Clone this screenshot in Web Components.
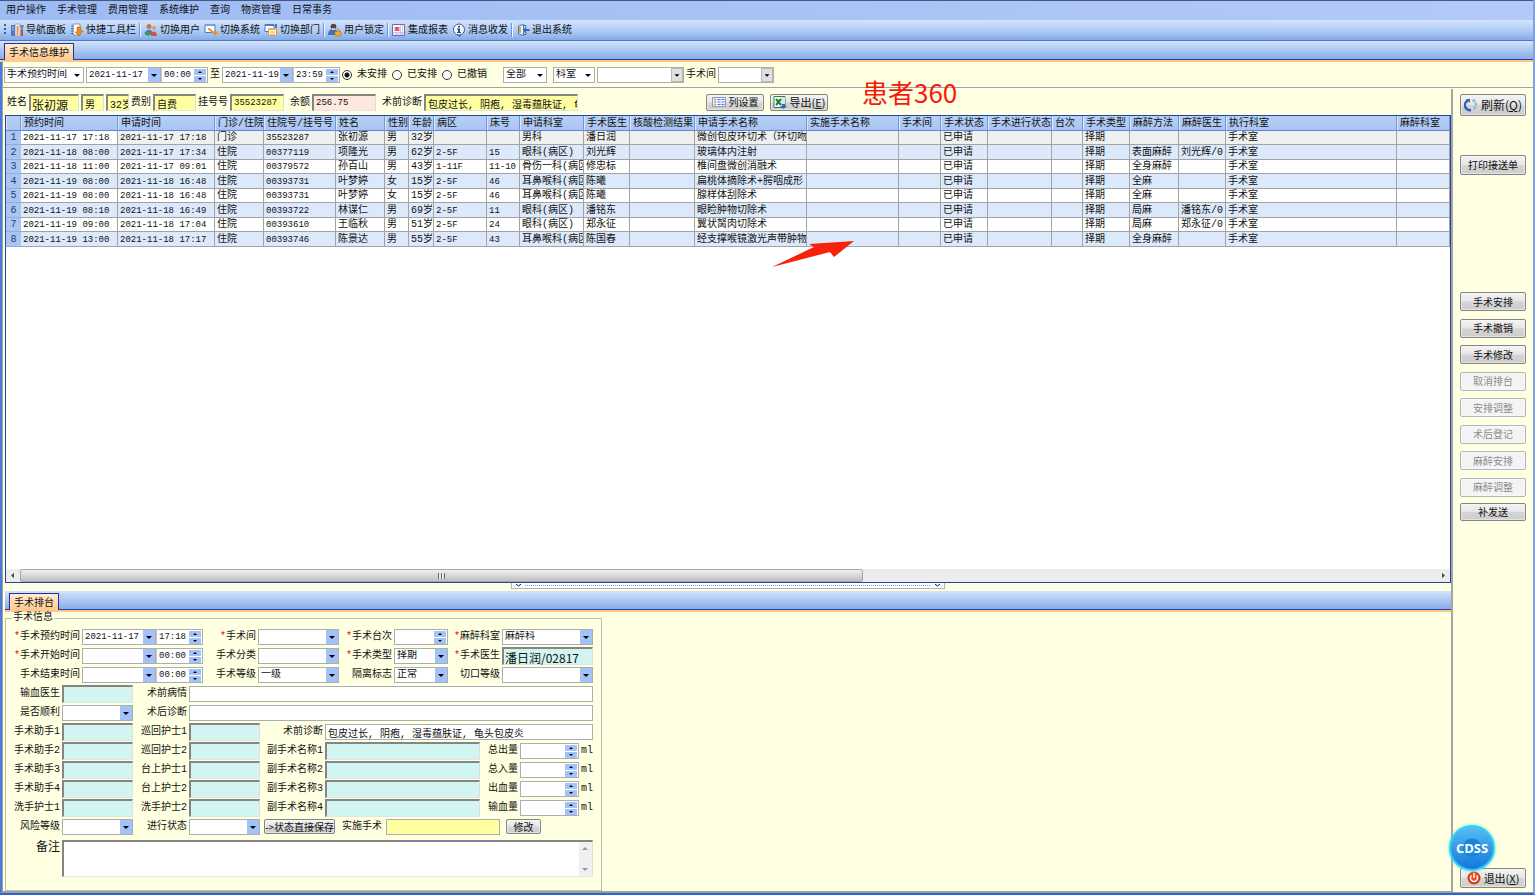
<!DOCTYPE html>
<html lang="zh-CN">
<head>
<meta charset="utf-8">
<title>手术信息维护</title>
<style>
    html, body {
        margin: 0;
        height: 100%;
    }

    body {
        font: 10px/12px "Liberation Mono", "Noto Sans CJK SC", monospace;
        color: #111;
        overflow: hidden;
    }
</style>
</head>
<body>
<surgery-app></surgery-app>

<script>
const down = '<svg class="arrow" viewBox="0 0 12 14" aria-hidden="true"><path d="M3 6h6L6 9z"/></svg>';

const controlStyles = `
    * { box-sizing: border-box; }
    button, input, select, textarea {
        font: inherit;
        color: inherit;
        margin: 0;
        padding: 0;
        border: 0;
        border-radius: 0;
        background: none;
        min-width: 0;
        outline: 0;
    }
    select { appearance: none; }
`;

const icons = {
    nav: '<path fill="#4a7cc8" d="M1 2h4v11H1z"/><path fill="#9cc2ee" d="M2 4h2v1H2zM2 6h2v1H2z"/><path fill="#e8edf5" stroke="#7587a8" stroke-width=".6" d="M5 1h5v12H5z"/><path stroke="#d8482c" stroke-width="2" d="M12 7v6"/><path stroke="#6b7f9c" stroke-width="1.6" fill="none" d="M11 2c0 3 2 3 2 0M12 4v3"/><path stroke="#e89030" stroke-width="1.6" d="M7.500 3v9"/>',
    quick: '<path fill="#fff" stroke="#6d87ad" stroke-width=".8" d="M3 1h7v11H3z"/><path stroke="#506e9e" d="M1 3h3M1 5.500h3M1 8h3M1 10.500h3"/><path fill="#f08a20" stroke="#b85a10" stroke-width=".5" d="M7 4h4v4h2l-4 5-4-4h2z"/>',
    users: '<circle cx="5" cy="3.500" r="2.500" fill="#c87848"/><path fill="#4878c0" d="M1 12c0-7 8-7 8 0z"/><circle cx="10" cy="5" r="2" fill="#e0a070"/><path fill="#d85038" d="M7 13c0-6 6-6 6 0z"/><path stroke="#3aa040" stroke-width="1.800" fill="none" d="M1 9l3 3 3-3"/>',
    system: '<path fill="#fff" stroke="#3f7fd0" d="M1 1.500h10v8H1z"/><path fill="#6ba2e8" d="M1 1h10v2H1z"/><path fill="none" stroke="#f08c1c" stroke-width="2" d="M4 6c3-1 3 4 7 4"/><path fill="#f08c1c" d="M10 7l4 3-4 3z"/>',
    dept: '<path fill="#fff" stroke="#3f7fd0" d="M1 1.500h9v7H1z"/><path fill="#3f7fd0" d="M1 1h9v2H1zM11 1h2v4h-2z"/><path fill="#fff8e0" stroke="#d8962c" d="M4.500 5.500h8v7h-8z"/><path fill="#f0b048" d="M4 5h9v2H4z"/><path stroke="#d8b878" d="M6 9h5M6 11h5"/>',
    lock: '<circle cx="5.500" cy="3.500" r="2.800" fill="#54404a"/><path fill="#3f70bd" d="M0 12c0-8 10-8 10 0z"/><path fill="#e8c0a0" d="M4 5h3v2H4z"/><path fill="none" stroke="#b08030" d="M8.500 9V7.500c0-2 3-2 3 0V9"/><path fill="#f4a82c" stroke="#a86a10" stroke-width=".5" d="M7 8.500h6v4.500H7z"/>',
    report: '<path fill="#fff" stroke="#7468b8" d="M.5 1.500h12v11H.5z"/><path stroke="#b9b2de" stroke-width=".7" d="M1 9.500h11M8.500 2v10M10.500 2v10M1 11h11M5 9v3"/><path fill="none" stroke="#d84860" d="M3 4.500h4v3H3z"/><path fill="#d84860" d="M4 5h2v2H4z"/>',
    info: '<circle cx="7" cy="6.500" r="5.500" fill="#f4f8ff" stroke="#41597e"/><path fill="#184fa8" d="M6 3h2v1.500H6zM5 5.500h3V9h1v1H5V9h1V6.500H5z"/><path fill="#41597e" d="M5 12h4l-1 2z"/>',
    exit: '<path fill="#e8f2ff" stroke="#3b76c0" d="M2.500 3l5-1.500v11l-5-1.500z"/><path fill="none" stroke="#3b76c0" d="M7.500 2.500h2.500v2M10 9v2.500H7.500"/><path fill="#f0a030" d="M3 4h2v6H3z"/><path fill="#2868c0" d="M13.500 6H10V4L7 7l3 3V8h3.500z"/>',
    columns: '<path fill="#eef4ff" stroke="#7f9bd0" d="M.5 2.500h13v9H.5z"/><path stroke="#f08a38" stroke-width="1.500" d="M2 4.500h2M2 7h2M2 9.500h2"/><path stroke="#4f7fd8" d="M5.500 4.500h3M9.500 4.500h3M5.500 7h3M9.500 7h3M5.500 9.500h3M9.500 9.500h3"/>',
    excel: '<path fill="#fff" stroke="#2f7d46" d="M1 1.500h11v11H1z"/><path fill="#d6ecd9" d="M8 2h4v10H8z"/><path stroke="#1f7a38" stroke-width="2" d="M3 4l5 6M8 4l-5 6"/><path fill="#2c70c8" d="M9 9h3v2h2l-3.500 3L7 11h2z"/>',
    refresh: '<path fill="none" stroke="#2f64b0" stroke-width="2.500" d="M4 2.500a5 5 0 0 0 3 9.500"/><path fill="none" stroke="#8db8e8" stroke-width="2.500" stroke-dasharray="3 1" d="M8.500 2a5 5 0 0 1 1 9"/><path fill="#2f64b0" d="M2 1h4v4z"/>',
    power: '<circle cx="7" cy="7" r="6.500" fill="#dc3414"/><circle cx="7" cy="6" r="5" fill="#f06028" opacity=".6"/><path fill="none" stroke="#fff" stroke-width="1.500" d="M4.500 4.500a3.500 3.500 0 1 0 5 0M7 2v5"/>'
};

const icon = (name) => `<svg class="icon" viewBox="0 0 14 14" aria-hidden="true">${icons[name]}</svg>`;

class MenuBar extends HTMLElement {
    constructor() {
        super();
        this.attachShadow({ mode: 'open' });
        this.shadowRoot.innerHTML = `
            <style>
                :host {
                    display: flex;
                    align-items: center;
                    gap: 11px;
                    height: 20px;
                    padding: 1px 0 0 6px;
                    box-sizing: border-box;
                    border-top: 1px solid #46597c;
                    background: linear-gradient(90deg, #9dbbf4, #b3caf8);
                }
                ::slotted(button) {
                    font: inherit;
                    color: inherit;
                    border: 0;
                    padding: 0;
                    background: none;
                }
            </style>
            <slot></slot>
        `;
    }
}

class ToolBar extends HTMLElement {
    constructor() {
        super();
        this.attachShadow({ mode: 'open' });
        this.shadowRoot.innerHTML = `
            <style>
                :host {
                    display: flex;
                    align-items: center;
                    gap: 4px;
                    height: 21px;
                    padding-left: 4px;
                    box-sizing: border-box;
                    border-bottom: 1px solid #4d76c0;
                    background: linear-gradient(#d3e3fc, #aecbf6 55%, #85abe6);
                }
                .grip {
                    width: 2px;
                    height: 12px;
                    background: repeating-linear-gradient(#3d5f9c 0 2px, transparent 2px 4px);
                }
                ::slotted(hr) {
                    width: 2px;
                    height: 14px;
                    margin: 0 -1px;
                    border: 0;
                    background: linear-gradient(90deg, #6f93ce 50%, #f0f6ff 50%);
                }
            </style>
            <span class="grip"></span><slot></slot>
        `;
    }
}

class ToolButton extends HTMLElement {
    connectedCallback() {
        this.attachShadow({ mode: 'open' });
        this.shadowRoot.innerHTML = `
            <style>
                ${controlStyles}
                :host { display: block; }
                button { display: flex; align-items: center; gap: 2px; white-space: nowrap; }
                span { padding-top: 2px; }
                .icon { width: 14px; height: 14px; }
            </style>
            <button type="button">${icon(this.getAttribute('icon'))}<span><slot></slot></span></button>
        `;
    }
}

class TabStrip extends HTMLElement {
    constructor() {
        super();
        this.attachShadow({ mode: 'open' });
        this.shadowRoot.innerHTML = `
            <style>
                ${controlStyles}
                :host {
                    display: flex;
                    align-items: flex-end;
                    height: 21px;
                    padding: 0 4px;
                    box-sizing: border-box;
                    border-bottom: 2px solid #fdc88c;
                    background: linear-gradient(#d2e3fc, #84aae6);
                    box-shadow: inset 0 -1px #2a3c9e;
                }
                button {
                    height: 17px;
                    padding: 3px 4px 0;
                    border: 1px solid #25309a;
                    border-bottom: 0;
                    background: linear-gradient(#ffecd2, #ffc98c);
                }
            </style>
            <button type="button" role="tab" aria-selected="true"><slot></slot></button>
        `;
    }
}

class CmdButton extends HTMLElement {
    connectedCallback() {
        const name = this.getAttribute('icon');
        this.attachShadow({ mode: 'open' });
        this.shadowRoot.innerHTML = `
            <style>
                ${controlStyles}
                :host { display: block; flex: none; font-family: "Noto Sans CJK SC", sans-serif; }
                button {
                    display: flex;
                    align-items: center;
                    justify-content: center;
                    gap: 3px;
                    width: 100%;
                    height: var(--h, 18px);
                    border: 1px solid #858585;
                    border-radius: 2px;
                    background: linear-gradient(#f4f4f4, #e6e6e6 48%, #d4d4d4 52%, #cecece);
                    box-shadow: inset 0 0 0 1px #fafafa80;
                    white-space: nowrap;
                }
                button:disabled { border-color: #b4b8bc; background: #f4f4f4; color: #8c8c8c; }
                .icon { width: 14px; height: 14px; }
            </style>
            <button type="button" ${this.hasAttribute('disabled') ? 'disabled' : ''}>
                ${name ? icon(name) : ''}<span><slot></slot></span>
            </button>
        `;
    }
}

class RadioGroup extends HTMLElement {
    connectedCallback() {
        const options = this.getAttribute('options').split(',');
        this.attachShadow({ mode: 'open' });
        this.shadowRoot.innerHTML = `
            <style>
                :host { display: flex; gap: 5px; }
                label { display: flex; align-items: center; gap: 5px; white-space: nowrap; }
                input {
                    appearance: none;
                    width: 10px;
                    height: 10px;
                    margin: 0;
                    border: 1px solid #333;
                    border-radius: 50%;
                    background: #fff;
                }
                input:checked { background: radial-gradient(#111 2px, #fff 3px); }
            </style>
            ${options.map((text, i) => `<label><input type="radio" name="state" ${i === 0 ? 'checked' : ''}>${text}</label>`).join('')}
        `;
    }
}

// Label and control are laid out directly by the parent's grid or flex box.
class FormField extends HTMLElement {
    connectedCallback() {
        this.attachShadow({ mode: 'open' });
        const label = this.getAttribute('label');
        const type = this.getAttribute('type') || 'text';
        const width = this.getAttribute('width');
        const span = this.getAttribute('span');
        const style = (width ? `width:${width}px;` : '') + (span ? `grid-column:span ${span};` : '');
        this.shadowRoot.innerHTML = `
            <style>
                ${controlStyles}
                :host { display: contents; }
                label { padding-top: 1px; white-space: nowrap; text-align: right; }
                label.big { font-size: 12px; line-height: 14px; align-self: start; }
                i { color: #f00; font-style: normal; }
                .control { display: flex; flex: none; min-width: 0; }
                .box {
                    display: grid;
                    grid-template-columns: minmax(0, 1fr) auto;
                    flex: 1;
                    min-width: 0;
                    height: 16px;
                    border: 1px solid #a9adb4;
                    background: #fff;
                }
                .box > input, .box > select, .box > textarea { width: 100%; height: 100%; padding: 1px 0 0 2px; }
                .box.clock { flex: 0 0 auto; width: 47px; border-left-color: #c8c8c8; }
                .date, .clock, .num { font-size: 9px; }
                .box > select { grid-area: 1 / 1 / 2 / 3; }
                .box > .arrow { grid-area: 1 / 2; pointer-events: none; }
                .arrow { display: block; width: 12px; height: 14px; background: #a3c2f8; }
                .flat .arrow { background: none; }
                .grey .arrow { background: #e0e0e0; border: 1px solid #b8b8b8; }
                .lookup, .yellow, .pink {
                    height: 18px;
                    border-color: #858585 #dedede #e4e4e4 #858585;
                    border-width: 2px 1px 1px 2px;
                    background: #d3f5f2;
                }
                .yellow { height: 17px; background: #ffffa0; }
                .pink { height: 17px; background: #ffe9df; }
                .plain { height: 16px; border: 1px solid #a9adb4; background: #ffffa0; }
                .large { font: 12px/14px "Noto Sans CJK SC", sans-serif; }
                .large > input { padding: 0 0 0 1px; }
                .spin { display: grid; grid-template-rows: 1fr 1fr; gap: 1px; width: 13px; padding: 1px 1px 0 0; }
                .spin button { display: block; background: #a3c2f8; }
                .spin svg { display: block; width: 100%; height: 100%; }
                .memo {
                    height: 37px;
                    border-color: #858585 #dedede #e4e4e4 #858585;
                    border-width: 2px 1px 1px 2px;
                }
                textarea { resize: none; overflow: hidden; }
                .rail { display: grid; align-content: space-between; width: 13px; background: #f0f0f0; fill: #999; }
                .rail .arrow { background: none; }
                .rail .arrow:first-child { transform: rotate(180deg); }
            </style>
            ${label ? `<label for="field" class="${this.hasAttribute('big') ? 'big' : ''}">${this.hasAttribute('required') ? '<i>*</i>' : ''}${label}</label>` : ''}
            <span class="control" style="${style}">${this.renderControl(type)}</span>
        `;
    }

    renderControl(type) {
        const value = this.getAttribute('value') || '';
        const look = this.getAttribute('look') || '';
        const name = this.hasAttribute('label') ? '' : `aria-label="${this.getAttribute('name')}"`;
        const spin = `
            <span class="spin">
                <button type="button" aria-label="增加"><svg viewBox="0 0 12 6"><path d="M4 4h4L6 2z"/></svg></button>
                <button type="button" aria-label="减少"><svg viewBox="0 0 12 6"><path d="M4 2h4L6 4z"/></svg></button>
            </span>`;

        if (type === 'select') {
            return `<span class="box ${look}"><select id="field" ${name}><option>${value}</option></select>${down}</span>`;
        }
        if (type === 'date') {
            return `
                <span class="box date"><input id="field" ${name} value="${value}"><button type="button" aria-label="选择日期">${down}</button></span>
                <span class="box clock"><input aria-label="时间" value="${this.getAttribute('time')}">${spin}</span>`;
        }
        if (type === 'spin') {
            return `<span class="box"><input id="field" ${name} value="${value}">${spin}</span>`;
        }
        if (type === 'memo') {
            return `<span class="box memo"><textarea id="field"></textarea><span class="rail">${down}${down}</span></span>`;
        }
        return `<span class="box ${look}"><input id="field" ${name} value="${value}"></span>`;
    }
}

const columns = [
    ['预约时间', 97], ['申请时间', 97], ['门诊/住院', 49], ['住院号/挂号号', 72], ['姓名', 49], ['性别', 24],
    ['年龄', 25], ['病区', 53], ['床号', 33], ['申请科室', 64], ['手术医生', 46], ['核酸检测结果', 65],
    ['申请手术名称', 112], ['实施手术名称', 92], ['手术间', 42], ['手术状态', 47], ['手术进行状态', 64],
    ['台次', 31], ['手术类型', 47], ['麻醉方法', 49], ['麻醉医生', 47], ['执行科室', 0], ['麻醉科室', 53]
];

// Columns holding digits only
const numeric = [0, 1, 3, 7, 8];

const surgeries = [
    ['2021-11-17 17:18', '2021-11-17 17:18', '门诊', '35523287', '张初源', '男', '32岁', '', '', '男科', '潘日润', '微创包皮环切术（环切吻', '', ''],
    ['2021-11-18 08:00', '2021-11-17 17:34', '住院', '00377119', '项隆光', '男', '62岁', '2-5F', '15', '眼科(病区)', '刘光辉', '玻璃体内注射', '表面麻醉', '刘光辉/0'],
    ['2021-11-18 11:00', '2021-11-17 09:01', '住院', '00379572', '孙百山', '男', '43岁', '1-11F', '11-10', '骨伤一科(病区', '修忠标', '椎间盘微创消融术', '全身麻醉', ''],
    ['2021-11-19 08:00', '2021-11-18 16:48', '住院', '00393731', '叶梦婷', '女', '15岁', '2-5F', '46', '耳鼻喉科(病区', '陈曦', '扁桃体摘除术+腭咽成形', '全麻', ''],
    ['2021-11-19 08:00', '2021-11-18 16:48', '住院', '00393731', '叶梦婷', '女', '15岁', '2-5F', '46', '耳鼻喉科(病区', '陈曦', '腺样体刮除术', '全麻', ''],
    ['2021-11-19 08:10', '2021-11-18 16:49', '住院', '00393722', '林谋仁', '男', '69岁', '2-5F', '11', '眼科(病区)', '潘铭东', '眼睑肿物切除术', '局麻', '潘铭东/0'],
    ['2021-11-19 09:00', '2021-11-18 17:04', '住院', '00393610', '王临秋', '男', '51岁', '2-5F', '24', '眼科(病区)', '郑永征', '翼状胬肉切除术', '局麻', '郑永征/0'],
    ['2021-11-19 13:00', '2021-11-18 17:17', '住院', '00393746', '陈景达', '男', '55岁', '2-5F', '43', '耳鼻喉科(病区', '陈国春', '经支撑喉镜激光声带肿物', '全身麻醉', '']
];

class SurgeryGrid extends HTMLElement {
    constructor() {
        super();
        this.attachShadow({ mode: 'open' });
    }

    connectedCallback() {
        const rows = surgeries.map((row, i) => {
            const cells = [...row.slice(0, 11), '', row[11], '', '', '已申请', '', '', '择期', row[12], row[13], '手术室', ''];
            return `<tr><th scope="row">${i + 1}</th>${cells.map((text, c) => `<td class="${numeric.includes(c) ? 'num' : ''}">${text}</td>`).join('')}</tr>`;
        });

        this.shadowRoot.innerHTML = `
            <style>
                ${controlStyles}
                :host {
                    display: flex;
                    flex-direction: column;
                    flex: 1;
                    min-height: 0;
                    border: 1px solid #1f46a6;
                    background: #fff;
                }
                .view { flex: 1; min-height: 0; overflow: hidden; }
                table { width: 100%; table-layout: fixed; border-collapse: separate; border-spacing: 0; }
                th, td {
                    height: 14px;
                    padding: 1px 0 0 2px;
                    overflow: hidden;
                    white-space: nowrap;
                    text-align: left;
                    font-weight: normal;
                    line-height: 12px;
                }
                thead th {
                    height: 15px;
                    padding: 2px 0 0 3px;
                    border-bottom: 1px solid #5c87d6;
                    border-right: 1px solid #6f97dc;
                    box-shadow: inset 1px 0 #dbe8fc;
                    background: linear-gradient(#b8d0f6, #a9c5f0);
                }
                tbody th { padding: 1px 0 0; text-align: center; background: #a9c5f0; color: #22407c; border-bottom: 1px solid #8eade0; }
                td { border-right: 1px solid #a3a3a3; border-bottom: 1px solid #a3a3a3; }
                tr:nth-child(even) td { background: #dce9fb; height: 15px; }
                tbody tr:first-child td { background: #f0f0f0; }
                tbody tr:first-child td:nth-child(2) { background: #fff; }
                .num { font-size: 9px; }
                .scroll { display: flex; height: 13px; background: #ececec; }
                .scroll button { width: 14px; }
                .scroll svg { display: block; width: 14px; height: 13px; fill: #444; }
                .track { flex: 1; }
                .thumb {
                    display: grid;
                    place-items: center;
                    width: 59.5%;
                    height: 13px;
                    border: 1px solid #a8a8a8;
                    border-radius: 2px;
                    background: linear-gradient(#f0f0f0, #d8d8d8 50%, #bebebe);
                }
                .thumb::after { content: ""; width: 7px; height: 6px; background: repeating-linear-gradient(90deg, #666 0 1px, #eee 1px 3px); }
            </style>
            <div class="view">
                <table>
                    <colgroup><col style="width:15px">${columns.map(([, w]) => `<col${w ? ` style="width:${w}px"` : ''}>`).join('')}</colgroup>
                    <thead><tr><th></th>${columns.map(([text]) => `<th scope="col">${text}</th>`).join('')}</tr></thead>
                    <tbody>${rows.join('')}</tbody>
                </table>
            </div>
            <div class="scroll">
                <button type="button" aria-label="向左"><svg viewBox="0 0 14 13"><path d="M8 4v5L5 6.500z"/></svg></button>
                <div class="track"><div class="thumb"></div></div>
                <button type="button" aria-label="向右"><svg viewBox="0 0 14 13"><path d="M6 4v5l3-2.500z"/></svg></button>
            </div>
        `;
    }
}

class SurgeryForm extends HTMLElement {
    constructor() {
        super();
        this.attachShadow({ mode: 'open' });
        const staff = [
            ['手术助手2', '巡回护士2', '副手术名称1', '总出量'],
            ['手术助手3', '台上护士1', '副手术名称2', '总入量'],
            ['手术助手4', '台上护士2', '副手术名称3', '出血量'],
            ['洗手护士1', '洗手护士2', '副手术名称4', '输血量']
        ];
        this.shadowRoot.innerHTML = `
            <style>
                :host { display: block; }
                fieldset {
                    width: fit-content;
                    margin: 0;
                    padding: 3px 8px 13px 2px;
                    border: 1px solid #bdbdb6;
                }
                legend { margin-left: 4px; padding: 0 1px; line-height: 12px; }
                .grid { display: grid; grid-auto-rows: minmax(19px, auto); column-gap: 2px; align-items: center; }
                .times { grid-template-columns: 72px 121px 51px 81px 51px 54px 50px 91px; }
                .details { grid-template-columns: 52px 71px 52px 71px 61px 155px 36px 59px 12px; }
                .actions { grid-column: span 5; display: flex; align-items: center; gap: 4px; padding-left: 2px; --h: 15px; }
                .save { width: 71px; margin-right: 3px; }
                .edit { width: 35px; margin-left: 2px; }
                .memo { margin-top: 4px; }
            </style>
            <fieldset>
                <legend>手术信息</legend>
                <div class="grid times">
                    <form-field required label="手术预约时间" type="date" value="2021-11-17" time="17:18"></form-field>
                    <form-field required label="手术间" type="select"></form-field>
                    <form-field required label="手术台次" type="spin"></form-field>
                    <form-field required label="麻醉科室" type="select" value="麻醉科"></form-field>
                    <form-field required label="手术开始时间" type="date" time="00:00"></form-field>
                    <form-field label="手术分类" type="select"></form-field>
                    <form-field required label="手术类型" type="select" value="择期"></form-field>
                    <form-field required label="手术医生" look="lookup large" value="潘日润/02817"></form-field>
                    <form-field label="手术结束时间" type="date" time="00:00"></form-field>
                    <form-field label="手术等级" type="select" value="一级"></form-field>
                    <form-field label="隔离标志" type="select" value="正常"></form-field>
                    <form-field label="切口等级" type="select"></form-field>
                </div>
                <div class="grid details">
                    <form-field label="输血医生" look="lookup"></form-field>
                    <form-field label="术前病情" span="6"></form-field>
                    <form-field label="是否顺利" type="select"></form-field>
                    <form-field label="术后诊断" span="6"></form-field>
                    <form-field label="手术助手1" look="lookup"></form-field>
                    <form-field label="巡回护士1" look="lookup"></form-field>
                    <form-field label="术前诊断" span="4" value="包皮过长, 阴疱, 湿毒蕴肤证, 龟头包皮炎"></form-field>
                    ${staff.map(([a, b, c, d]) => `
                        <form-field label="${a}" look="lookup"></form-field>
                        <form-field label="${b}" look="lookup"></form-field>
                        <form-field label="${c}" look="lookup"></form-field>
                        <form-field label="${d}" type="spin"></form-field><span>ml</span>
                    `).join('')}
                    <form-field label="风险等级" type="select"></form-field>
                    <form-field label="进行状态" type="select"></form-field>
                    <div class="actions">
                        <cmd-button class="save">-&gt;状态直接保存</cmd-button>
                        <form-field label="实施手术" look="plain" width="114"></form-field>
                        <cmd-button class="edit">修改</cmd-button>
                    </div>
                </div>
                <div class="grid details memo">
                    <form-field big label="备注" type="memo" span="8"></form-field>
                </div>
            </fieldset>
        `;
    }
}

class PaneSplitter extends HTMLElement {
    constructor() {
        super();
        this.attachShadow({ mode: 'open' });
        this.shadowRoot.innerHTML = `
            <style>
                :host { display: flex; justify-content: center; height: 8px; }
                .bar {
                    display: flex;
                    align-items: center;
                    gap: 3px;
                    width: 30%;
                    height: 6px;
                    padding: 0 3px;
                    box-sizing: border-box;
                    border: 1px solid #b5b5ae;
                    border-top: 0;
                    background: #fff;
                }
                .dots { flex: 1; height: 1px; background: repeating-linear-gradient(90deg, #6d9be0 0 1px, transparent 1px 2px); }
                svg { width: 7px; height: 5px; fill: none; stroke: #111; }
            </style>
            <div class="bar">
                <svg viewBox="0 0 7 5"><path d="M1 1l2.500 2L6 1"/></svg>
                <span class="dots"></span>
                <svg viewBox="0 0 7 5"><path d="M1 1l2.500 2L6 1"/></svg>
            </div>
        `;
    }
}

class ActionPanel extends HTMLElement {
    constructor() {
        super();
        this.attachShadow({ mode: 'open' });
        this.shadowRoot.innerHTML = `
            <style>
                :host {
                    display: flex;
                    flex-direction: column;
                    width: 66px;
                    padding: 5px 7px 4px;
                }
                .refresh { --h: 22px; font-size: 12px; margin-bottom: 39px; }
                .print { --h: 20px; margin-bottom: 117px; }
                .group { display: flex; flex-direction: column; justify-content: space-between; height: 205px; margin-bottom: 6px; --h: 19px; }
                .exit { --h: 20px; font-size: 11px; margin-top: auto; }
            </style>
            <cmd-button class="refresh" icon="refresh">刷新(<u>Q</u>)</cmd-button>
            <cmd-button class="print">打印接送单</cmd-button>
            <div class="group">
                <cmd-button>手术安排</cmd-button>
                <cmd-button>手术撤销</cmd-button>
                <cmd-button>手术修改</cmd-button>
                <cmd-button disabled>取消排台</cmd-button>
                <cmd-button disabled>安排调整</cmd-button>
                <cmd-button disabled>术后登记</cmd-button>
                <cmd-button disabled>麻醉安排</cmd-button>
                <cmd-button disabled>麻醉调整</cmd-button>
            </div>
            <cmd-button>补发送</cmd-button>
            <cmd-button class="exit" icon="power">退出(<u>X</u>)</cmd-button>
        `;
    }
}

class SurgeryApp extends HTMLElement {
    constructor() {
        super();
        this.attachShadow({ mode: 'open' });
        this.shadowRoot.innerHTML = `
            <style>
                :host {
                    display: flex;
                    flex-direction: column;
                    position: relative;
                    height: 100vh;
                    box-sizing: border-box;
                    border-bottom: 2px solid #2c66d4;
                    border-right: 2px solid #79a4ec;
                    background: #ffffe1;
                }
                main {
                    display: flex;
                    flex-direction: column;
                    flex: 1;
                    min-height: 0;
                    border-left: 2px solid #4b7bd8;
                    border-bottom: 1px solid #9c9ca0;
                }
                .bar { display: flex; align-items: center; height: 26px; box-sizing: border-box; }
                .filter { gap: 2px; padding-left: 1px; border-bottom: 1px solid #a3a3a3; border-left: 1px solid #a0a0a0; }
                .patient { gap: 2px; padding-left: 2px; }
                radio-group { margin-right: 14px; }
                .body { display: flex; flex: 1; min-height: 0; border-top: 1px solid #fff; border-left: 1px solid #a0a0a0; }
                .left {
                    display: flex;
                    flex-direction: column;
                    flex: 1;
                    min-width: 0;
                    padding-left: 2px;
                    border-right: 2px solid #a5a5a5;
                    border-bottom: 1px solid #a5a5a5;
                }
                .space { flex: 0 0 2px; }
                .wide { flex: 0 0 124px; }
                .columns, .export { width: 58px; --h: 17px; }
                .export { margin-left: 4px; font-size: 11px; }
                .note { position: absolute; left: 862px; top: 76px; font: 26px/32px "Noto Sans CJK SC", sans-serif; color: #f81808; }
                .pointer { position: absolute; left: 770px; top: 238px; width: 86px; height: 32px; fill: #f8220c; }
                .cdss {
                    position: absolute;
                    right: 38px;
                    bottom: 22px;
                    width: 46px;
                    height: 46px;
                    padding: 0;
                    border: 2px solid #35cfee;
                    border-radius: 50%;
                    background: radial-gradient(circle, #1c86dc 9px, transparent 10px), linear-gradient(#54bdf2, #1479dc);
                    box-shadow: 0 0 3px #3fdcf0;
                    color: #fff;
                    font: bold 13px/14px "Open Sans", sans-serif;
                }
            </style>
            <menu-bar>
                <button>用户操作</button><button>手术管理</button><button>费用管理</button><button>系统维护</button>
                <button>查询</button><button>物资管理</button><button>日常事务</button>
            </menu-bar>
            <tool-bar>
                <tool-button icon="nav">导航面板</tool-button>
                <tool-button icon="quick">快捷工具栏</tool-button>
                <hr>
                <tool-button icon="users">切换用户</tool-button>
                <tool-button icon="system">切换系统</tool-button>
                <tool-button icon="dept">切换部门</tool-button>
                <hr>
                <tool-button icon="lock">用户锁定</tool-button>
                <hr>
                <tool-button icon="report">集成报表</tool-button>
                <tool-button icon="info">消息收发</tool-button>
                <hr>
                <tool-button icon="exit">退出系统</tool-button>
            </tool-bar>
            <tab-strip>手术信息维护</tab-strip>
            <main>
                <div class="bar filter">
                    <form-field name="时间类型" type="select" look="flat" value="手术预约时间" width="80"></form-field>
                    <form-field name="开始" type="date" value="2021-11-17" time="00:00" width="122"></form-field>
                    <span>至</span>
                    <form-field name="结束" type="date" value="2021-11-19" time="23:59" width="118"></form-field>
                    <radio-group options="未安排,已安排,已撤销"></radio-group>
                    <form-field name="范围" type="select" look="flat" value="全部" width="44"></form-field>
                    <span class="space"></span>
                    <form-field name="分类" type="select" look="flat" value="科室" width="42"></form-field>
                    <form-field name="科室名称" type="select" look="grey" width="87"></form-field>
                    <form-field label="手术间" type="select" look="grey" width="56"></form-field>
                </div>
                <div class="body">
                    <div class="left">
                        <div class="bar patient">
                            <form-field label="姓名" look="yellow large" value="张初源" width="50"></form-field>
                            <form-field name="性别" look="yellow" value="男" width="23"></form-field>
                            <form-field name="年龄" look="yellow" value="32岁" width="23"></form-field>
                            <form-field label="费别" look="yellow" value="自费" width="43"></form-field>
                            <form-field label="挂号号" look="yellow num" value="35523287" width="54"></form-field>
                            <span class="space"></span>
                            <form-field label="余额" look="pink num" value="256.75" width="64"></form-field>
                            <span class="space"></span>
                            <form-field label="术前诊断" look="yellow" value="包皮过长, 阴疱, 湿毒蕴肤证, 龟" width="154"></form-field>
                            <span class="wide"></span>
                            <cmd-button class="columns" icon="columns">列设置</cmd-button>
                            <cmd-button class="export" icon="excel">导出(<u>E</u>)</cmd-button>
                        </div>
                        <surgery-grid></surgery-grid>
                        <pane-splitter></pane-splitter>
                        <tab-strip>手术排台</tab-strip>
                        <surgery-form></surgery-form>
                    </div>
                    <action-panel></action-panel>
                </div>
            </main>
            <div class="note">患者360</div>
            <svg class="pointer" viewBox="0 0 86 32" aria-hidden="true"><path d="M2 29L44 9 39 6 84 3 64 19 60 14z"/></svg>
            <button type="button" class="cdss">CDSS</button>
        `;
    }
}

customElements.define('menu-bar', MenuBar);
customElements.define('tool-bar', ToolBar);
customElements.define('tool-button', ToolButton);
customElements.define('tab-strip', TabStrip);
customElements.define('cmd-button', CmdButton);
customElements.define('radio-group', RadioGroup);
customElements.define('form-field', FormField);
customElements.define('surgery-grid', SurgeryGrid);
customElements.define('surgery-form', SurgeryForm);
customElements.define('pane-splitter', PaneSplitter);
customElements.define('action-panel', ActionPanel);
customElements.define('surgery-app', SurgeryApp);
</script>
</body>
</html>
